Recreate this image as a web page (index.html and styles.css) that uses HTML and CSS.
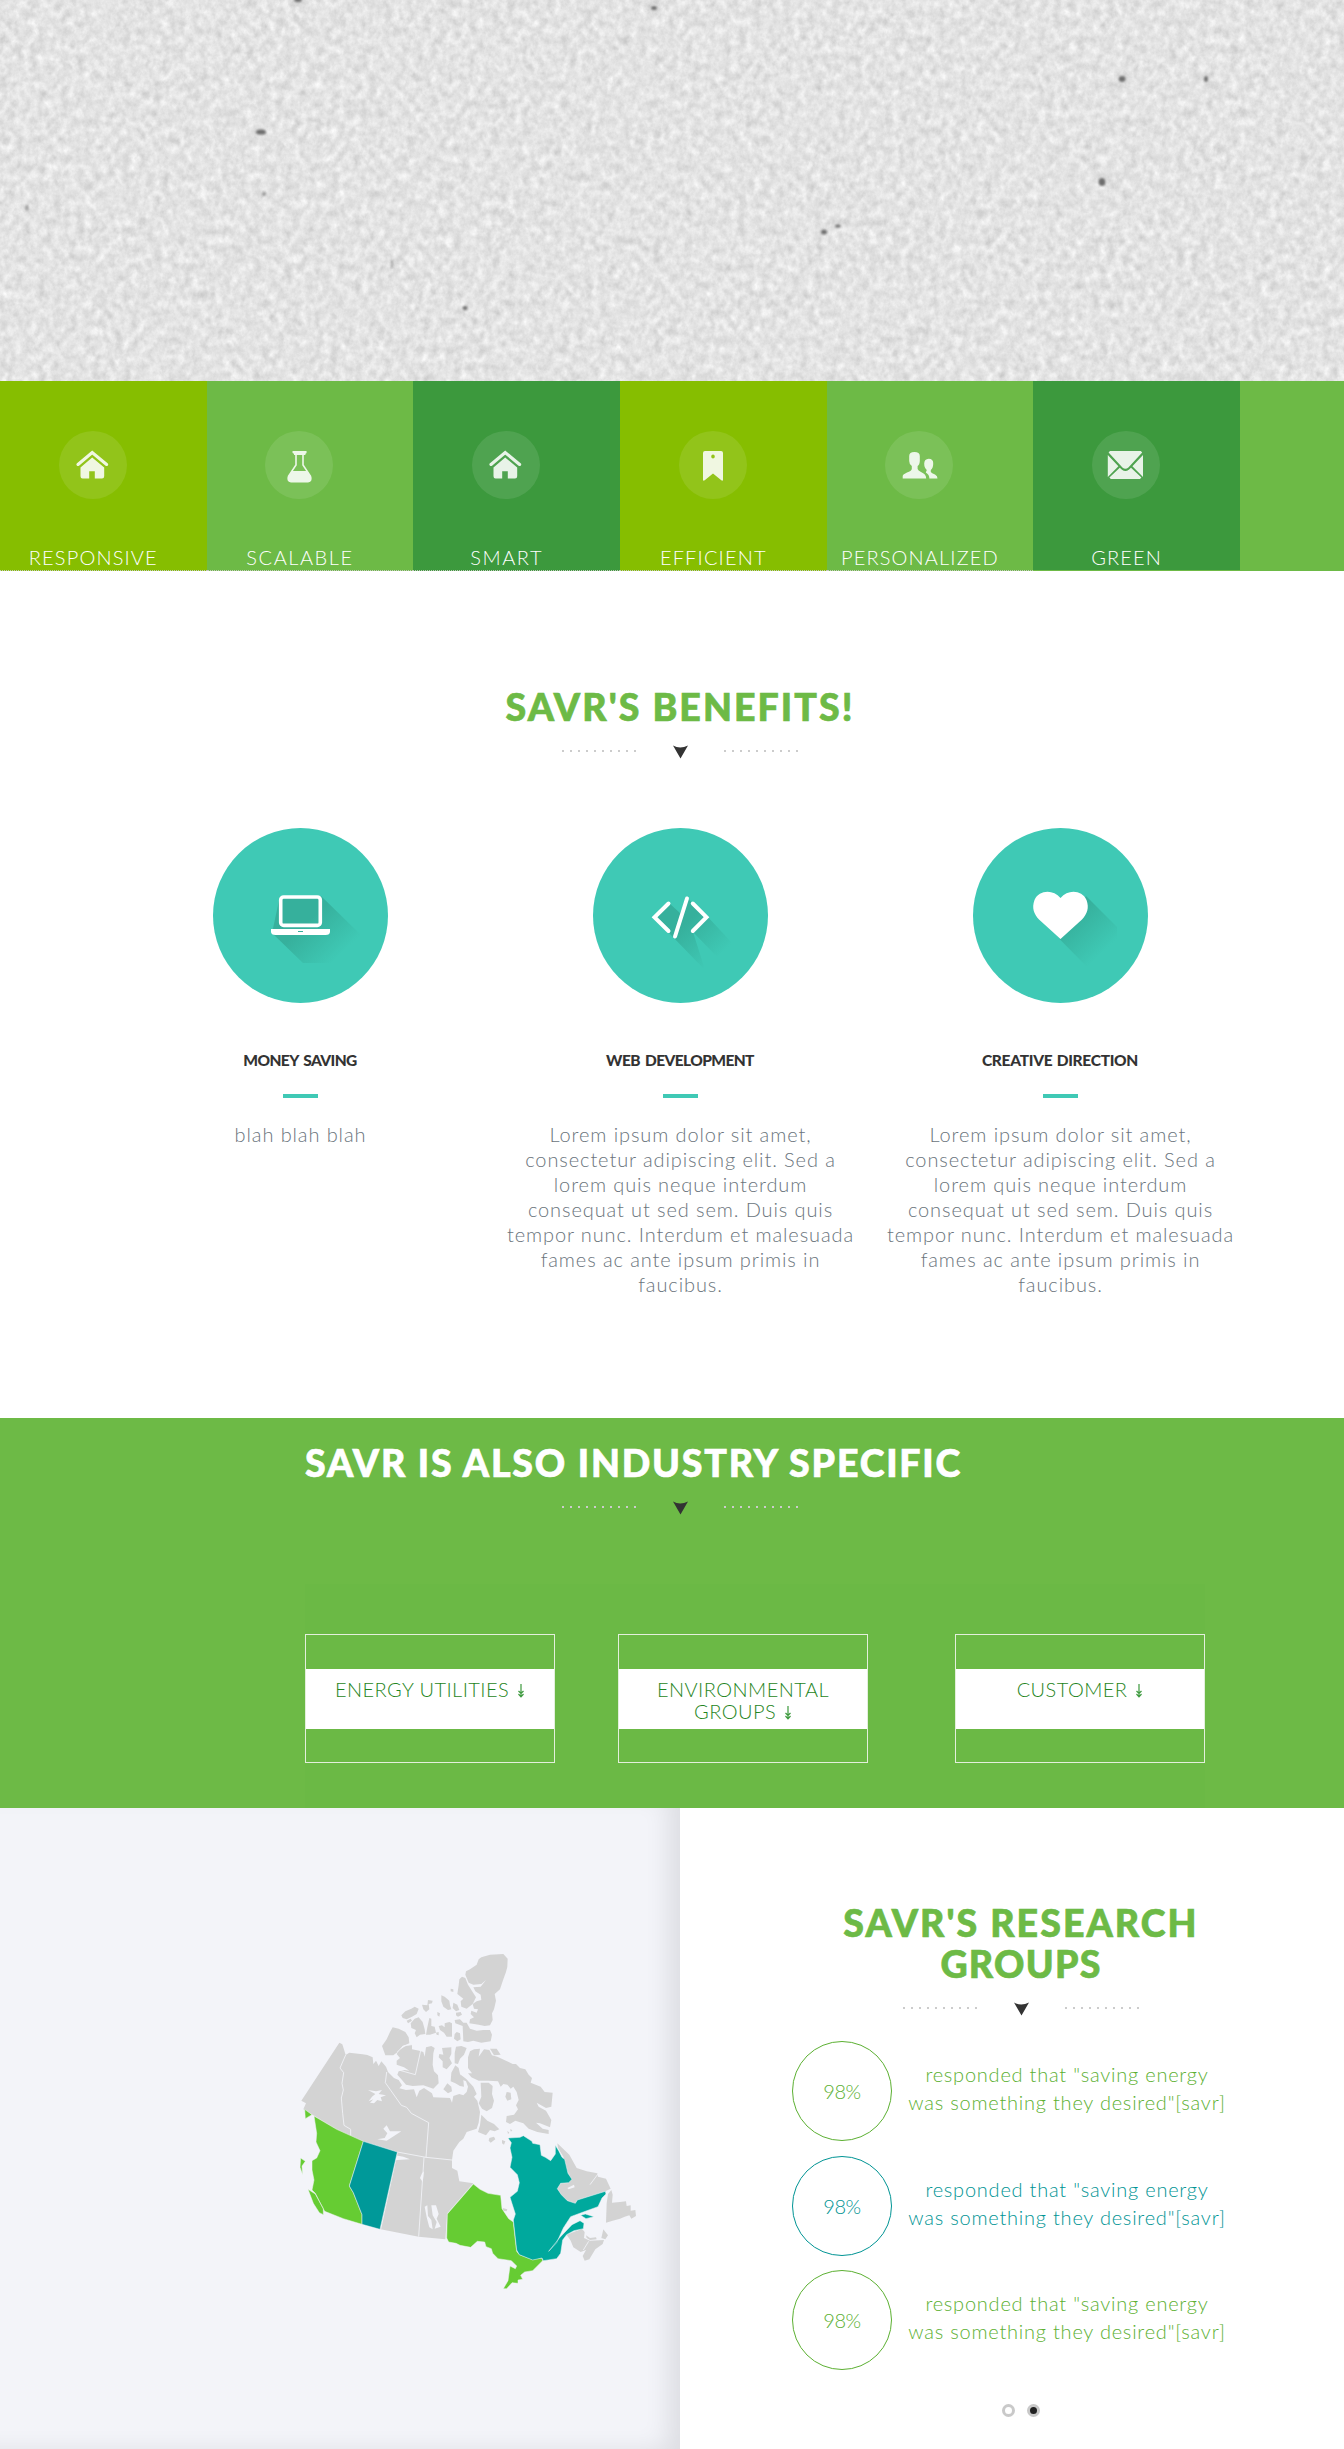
FILE: index.html
```html
<!DOCTYPE html>
<html lang="en">
<head>
<meta charset="utf-8">
<title>SAVR</title>
<link rel="stylesheet" href="styles.css">
</head>
<body>
<header class="hero">
  <svg class="paper" width="1344" height="381" viewBox="0 0 1344 381" aria-hidden="true">
    <defs>
      <filter id="grain" x="0" y="0" width="100%" height="100%" color-interpolation-filters="sRGB">
        <feTurbulence type="fractalNoise" baseFrequency="0.13 0.11" numOctaves="4" seed="12"/>
        <feColorMatrix values="0.16 0.12 0 0 0.75  0.16 0.12 0 0 0.75  0.16 0.12 0 0 0.75  0 0 0 0 1"/>
      </filter>
      <filter id="soft"><feGaussianBlur stdDeviation="0.8"/></filter>
    </defs>
    <rect width="1344" height="381" fill="#e3e3e3"/>
    <rect width="1344" height="381" filter="url(#grain)"/>
    <g fill="#6d6d6d" filter="url(#soft)">
      <ellipse cx="261" cy="132" rx="5" ry="2.6"/>
      <ellipse cx="298" cy="0" rx="4" ry="2"/>
      <ellipse cx="654" cy="8" rx="3" ry="2"/>
      <ellipse cx="1122" cy="79" rx="3.5" ry="3"/>
      <ellipse cx="1206" cy="79" rx="2" ry="3"/>
      <ellipse cx="1102" cy="182" rx="3.5" ry="4"/>
      <ellipse cx="824" cy="232" rx="3" ry="2.5"/>
      <ellipse cx="838" cy="226" rx="3" ry="1.5"/>
      <ellipse cx="465" cy="308" rx="2.5" ry="2"/>
      <ellipse cx="264" cy="194" rx="2" ry="2" opacity=".6"/>
      <ellipse cx="27" cy="208" rx="1.5" ry="3" opacity=".6"/>
      <ellipse cx="392" cy="264" rx="1.2" ry="5" opacity=".5"/>
    </g>
  </svg>
</header>

<nav class="tiles">
  <a class="tile lime"><span class="badge"><svg viewBox="0 0 68 68"><path d="M19 33.4 33.2 21.6 47.6 33.4" fill="none" stroke="currentColor" stroke-width="3.2" stroke-linecap="round"/><path d="M33.2 26.4 45.2 36.6V45.3Q45.2 47.5 43 47.5H35.8V40.2H30.2V47.5H23.5Q21.5 47.5 21.5 45.3V36.6Z"/></svg></span><span class="label">RESPONSIVE</span></a>
  <a class="tile leaf"><span class="badge"><svg viewBox="0 0 68 68"><path d="M28 20H41Q42 20 41.6 21.4 41.2 22.6 40.4 22.8V24H29V22.8Q27.6 22.4 27.4 21.2 27.3 20 28 20Z"/><path d="M31 23V34L23.6 45Q21.8 50.2 26 50.6H43Q47.2 50.2 45.4 45L38 34V23" fill="none" stroke="currentColor" stroke-width="1.6"/><path d="M26.8 40H42.2L45.6 45.5Q46.6 50.6 43 51H26Q22.4 50.6 23.4 45.5Z"/></svg></span><span class="label wide">SCALABLE</span></a>
  <a class="tile forest"><span class="badge"><svg viewBox="0 0 68 68"><path d="M19 33.4 33.2 21.6 47.6 33.4" fill="none" stroke="currentColor" stroke-width="3.2" stroke-linecap="round"/><path d="M33.2 26.4 45.2 36.6V45.3Q45.2 47.5 43 47.5H35.8V40.2H30.2V47.5H23.5Q21.5 47.5 21.5 45.3V36.6Z"/></svg></span><span class="label wide">SMART</span></a>
  <a class="tile lime"><span class="badge"><svg viewBox="0 0 68 68"><path fill-rule="evenodd" d="M26 20H42Q44 20 44 22V49Q43.6 50.6 42 49L34 42.6 26 49Q24.4 50.6 24 49V22Q24 20 26 20ZM34 23.4A1.8 2 0 1 0 34 27.4 1.8 2 0 1 0 34 23.4Z"/></svg></span><span class="label">EFFICIENT</span></a>
  <a class="tile leaf"><span class="badge"><svg viewBox="0 0 68 68"><path d="M29.4 21Q34.8 21 34.8 25V30Q34.6 34 32.6 35V38Q33 39.6 36 41 41 43 41.2 47.4H17.7V45Q18 43.4 22 41.6 26.4 40 26.8 38V35Q24.2 33.4 24.2 30V25Q24.2 21 29.4 21Z"/><path d="M43.7 27.8Q48.2 28 48.2 32 48.4 37 45.8 39V41Q46.6 42.4 50 43.6 52.6 45 52.5 47.4H44.4Q44.4 43.6 40.8 41.4L41.8 39Q39.2 37 39.2 32.6 39.4 28 43.7 27.8Z"/></svg></span><span class="label">PERSONALIZED</span></a>
  <a class="tile forest last"><span class="badge"><svg viewBox="0 0 68 68"><path d="M16.6 21.5 18 20H48.8L50.2 21.5 36.4 36.5Q33.4 39 30.4 36.5ZM15.8 24 26.4 35.2 15.8 46ZM51 24V46L40.4 35.2ZM27.8 36.8 30 38.8Q33.4 41.4 36.8 38.8L39 36.8 49.4 46.6 48 48H18.8L17.4 46.6Z"/></svg></span><span class="label">GREEN</span></a>
</nav>

<section class="benefits">
  <h2 class="title">SAVR'S BENEFITS!</h2>
  <svg class="rule" width="238" height="16" viewBox="0 0 238 16"><path class="dots" d="M1 7H76M163 7H238"/><path d="M112 1.5Q119 5.5 127 1.5L119.5 14.5Z" fill="#333"/></svg>
  <div class="columns">
    <article class="card">
      <svg class="disc" viewBox="0 0 175 175"><defs><linearGradient id="fade" gradientUnits="userSpaceOnUse" x1="96" y1="92" x2="128" y2="126"><stop offset="0" stop-color="#36b09c"/><stop offset="1" stop-color="#3fc9b5"/></linearGradient></defs>
        <circle cx="87.5" cy="87.5" r="87.5" fill="#3fc9b5"/>
        <path d="M67 68H108L147 106V135H90L59 105Z" fill="url(#fade)"/>
        <rect x="67.7" y="69" width="39.6" height="28.4" rx="3" fill="none" stroke="#fff" stroke-width="3.6"/>
        <path d="M58 101H117V103.5Q117 107 112.5 107H62.5Q58 107 58 103.5Z" fill="#fff"/><path d="M85 103.5H90" stroke="#36b09c"/></svg>
      <h3 class="tight">MONEY SAVING</h3><hr>
      <p>blah blah blah</p>
    </article>
    <article class="card">
      <svg class="disc" viewBox="0 0 175 175"><circle cx="87.5" cy="87.5" r="87.5" fill="#3fc9b5"/>
        <path d="M76 75 87 85 93.8 69 101 77 114.8 89 142 118 130 135 100 104 112 142 76 105 60 89Z" fill="url(#fade)"/>
        <path d="M75.5 75.5 61.5 89.2 75.5 103M94 70.5 82 108.5M99.8 75.5 113.5 89.2 99.8 103" fill="none" stroke="#fff" stroke-width="4" stroke-linecap="round"/></svg>
      <h3 class="tight">WEB DEVELOPMENT</h3><hr>
      <p>Lorem ipsum dolor sit amet,<br>consectetur adipiscing elit. Sed a<br>lorem quis neque interdum<br>consequat ut sed sem. Duis quis<br>tempor nunc. Interdum et malesuada<br>fames ac ante ipsum primis in<br>faucibus.</p>
    </article>
    <article class="card">
      <svg class="disc" viewBox="0 0 175 175"><circle cx="87.5" cy="87.5" r="87.5" fill="#3fc9b5"/>
        <path d="M113 68 144 99V118L117 142 86.5 111Z" fill="url(#fade)"/>
        <path d="M87.5 70C80 61 66 62 61.5 72 58.5 80 61 86 66 91.5L87.5 111 109 91.5C114 86 116.5 80 113.5 72 109 62 95 61 87.5 70Z" fill="#fff"/></svg>
      <h3>CREATIVE DIRECTION</h3><hr>
      <p>Lorem ipsum dolor sit amet,<br>consectetur adipiscing elit. Sed a<br>lorem quis neque interdum<br>consequat ut sed sem. Duis quis<br>tempor nunc. Interdum et malesuada<br>fames ac ante ipsum primis in<br>faucibus.</p>
    </article>
  </div>
</section>

<section class="industry">
  <h2 class="title">SAVR IS ALSO INDUSTRY SPECIFIC</h2>
  <svg class="rule" width="238" height="16" viewBox="0 0 238 16"><path class="dots" d="M1 7H76M163 7H238"/><path d="M112 1.5Q119 5.5 127 1.5L119.5 14.5Z" fill="#333"/></svg>
  <div class="boxes">
    <a class="box"><span>ENERGY UTILITIES <svg class="down" viewBox="0 0 8 14"><path d="M4 0V13M1.5 7 4 9.5 6.500 7M1.500 10 4 12.800 6.500 10"/></svg></span></a>
    <a class="box"><span>ENVIRONMENTAL<br>GROUPS <svg class="down" viewBox="0 0 8 14"><path d="M4 0V13M1.500 7 4 9.500 6.500 7M1.500 10 4 12.800 6.500 10"/></svg></span></a>
    <a class="box"><span>CUSTOMER <svg class="down" viewBox="0 0 8 14"><path d="M4 0V13M1.500 7 4 9.500 6.500 7M1.500 10 4 12.800 6.500 10"/></svg></span></a>
  </div>
</section>

<section class="research">
  <div class="map">
    <svg width="360" height="360" viewBox="0 0 1080 1080" role="img" aria-label="Map of Canada">
      <g class="land">
        <!-- mainland territories and prairies -->
        <path d="M148 308 157 313 167 345 178 338 218 343 232 345 248 352 250 372 258 362 266 378 274 364 288 380 294 396 312 414 326 420 336 436 328 445 348 450 372 448 380 472 388 452 402 444 426 460 430 472 480 474 486 488 490 468 508 462 520 466 530 456 534 440 528 424 510 416 512 404 528 416 550 440 560 462 552 470 562 482 570 516 566 548 560 566 530 576 520 596 508 606 490 632 486 660 486 684 502 692 508 724 550 730 472 820 466 898 386 890 272 868 218 853 180 740 210 610 40 508 48 490 34 482Z"/>
        <!-- Arctic islands -->
        <path d="M574 52 600 44 640 42 653 56 652 80 648 96 640 118 630 148 614 162 618 182 612 208 606 220 608 240 600 256 584 258 566 254 538 250 540 238 552 232 542 222 544 212 560 218 564 208 552 206 548 192 560 184 574 180 572 164 556 154 550 142 572 140 588 120 574 132 550 134 536 128 526 104 528 94 540 88 560 74 566 58Z"/>
        <path d="M516 110 526 114 534 134 558 172 548 192 530 206 514 200 512 184 520 176 502 162 506 136 508 118Z"/>
        <path d="M454 166 464 170 478 182 480 196 484 208 474 210 460 200 454 184ZM490 188 502 194 508 210 498 214 488 204ZM482 146 490 148 490 156 482 154ZM498 218 512 216 516 224 504 230 498 226ZM442 216 450 220 448 230 442 226ZM396 194 412 196 414 180 428 182 426 190 416 192 418 208 408 216 400 208ZM334 226 346 214 364 206 374 200 386 206 380 222 366 230 350 238 338 234ZM350 242 362 236 366 242 354 250Z"/>
        <path d="M362 250 374 236 386 232 398 246 404 268 406 282 390 284 380 292 374 280 378 270 364 264ZM418 234 424 236 424 258 434 260 438 278 420 284 408 284 412 262ZM438 278 446 276 446 286 440 284ZM446 258 456 256 464 262 464 250 478 246 486 250 486 290 470 290 462 278 450 270ZM500 276 510 280 512 298 502 304 492 296 494 282ZM494 240 510 238 520 248 530 248 540 266 560 272 580 270 600 270 606 284 602 304 574 308 550 302 534 306 520 304 518 258 496 250Z"/>
        <path d="M308 262 326 266 346 276 356 292 358 310 338 318 326 334 310 346 286 346 276 318 290 298 300 276Z"/>
        <path d="M328 330 350 316 366 314 366 328 388 332 400 336 404 350 408 322 424 318 434 324 430 340 428 374 432 394 444 406 446 430 430 446 400 436 368 438 348 434 336 420 322 404 326 394 344 390 358 392 342 382 320 374 320 362 330 354 320 342Z"/>
        <path d="M456 324 484 322 484 342 478 354 486 370 470 388 458 382 458 364 446 352 448 342 460 344ZM498 320 514 318 530 324 522 344 510 356 504 372 494 370 494 340ZM496 376 506 384 510 402 520 420 522 440 510 438 496 430 482 424 484 398ZM472 430 484 440 486 454 474 460 460 448Z"/>
        <path d="M552 328 570 326 566 350 582 328 598 330 606 346 622 350 656 366 668 372 678 372 690 384 706 388 716 404 726 414 722 428 752 440 764 456 788 458 784 500 768 504 740 488 746 500 768 512 784 540 780 562 750 550 738 548 758 566 776 570 776 582 742 576 716 566 700 550 676 542 660 552 648 546 650 528 672 524 684 508 678 496 686 480 680 456 670 440 662 446 652 434 640 432 632 440 624 424 596 422 566 422 544 412 534 400 546 400 534 384 534 352 540 334ZM600 326 620 326 632 344 612 346ZM572 428 596 428 608 438 606 462 612 482 606 504 590 514 576 506 566 490 574 470ZM574 524 592 542 612 552 628 568 614 574 600 570 588 586 564 576 570 556ZM650 456 662 458 664 478 652 482 646 470ZM598 594 612 590 616 598 602 608 596 602ZM636 600 646 604 642 614 636 610ZM652 572 658 578 654 582ZM660 568 667 570 663 575Z"/>
        <!-- Labrador, Newfoundland and the Maritimes -->
        <path d="M802 610 838 644 860 684 890 694 922 700 924 710 948 716 962 746 946 754 862 780 856 790 832 786 814 772 802 746 812 730 836 728 844 716 830 690 820 650 804 624ZM964 750 968 764 966 788 990 786 1008 784 1010 798 1022 796 1022 812 1036 810 1038 828 1024 836 1018 826 1004 830 990 836 968 842 948 848 950 790 954 762ZM830 884 876 866 884 876 882 894 900 902 942 900 938 912 916 928 898 958 884 962 878 948 888 930 872 936 850 922 842 902ZM888 886 900 894 918 892 920 898 900 900 890 894ZM940 868 954 886 946 898 934 894ZM638 804 652 808 650 814 640 812Z"/>
      </g>
      <!-- lakes -->
      <path class="water" d="M234 450 258 454 276 450 266 462 288 466 272 472 276 484 262 480 252 490 240 488 250 478 236 484 246 470 256 462ZM290 556 300 574 334 574 312 588 290 602 262 598 284 594 292 580 280 566ZM308 656 316 646 340 650 360 658 322 660 308 664ZM396 700 402 694 398 726 390 714ZM404 800 412 796 414 828 424 840 428 868 418 862 410 832ZM424 796 438 796 446 822 440 836 452 860 434 866 440 846 428 826ZM832 744 852 734 854 742 836 748Z"/>
      <path class="border" d="M167 345 150 384 161 398 156 430 160 450 154 474 158 520 162 556 182 568V590M290 396 286 428 334 496 350 502 364 520 416 548 408 652M366 314 340 318 322 336M392 332 376 404 326 390M322 636 408 652 486 660M402 652 386 890M322 636 272 868M924 702 900 734M896 904 880 930"/>
      <g class="green">
        <path d="M44 508 66 524 46 536ZM72 528 140 568 220 604 178 738 190 758 216 824 216 853 160 836 104 814 88 784 76 760 66 750 72 720 66 690 66 662 80 654 90 632 78 606 80 580ZM32 654 46 664 36 678 38 704 30 682ZM54 748 76 762 86 780 100 806 100 824 88 818 70 790Z"/>
        <path d="M550 732 570 748 594 760 632 766 636 806 656 836 670 846 680 934 688 944 726 958 756 954 758 962 728 992 704 996 692 1006 698 1018 684 1020 684 1030 666 1028 650 1046 640 1046 654 1022 660 978 676 986 680 978 664 962 624 956 608 940 604 926 588 920 584 906 562 904 542 922 510 916 498 910 476 906 470 894 472 822Z"/>
      </g>
      <path class="blue" d="M220 604 322 636 270 868 216 853 216 824 190 758 178 738Z"/>
      <path class="teal" d="M654 594 690 592 700 587 726 604 728 610 750 614 754 646 766 652 782 662 796 642 796 616 806 632 816 652 824 658 834 700 846 718 836 728 812 730 802 746 814 764 832 782 856 790 862 780 946 754 948 762 936 774 924 800 880 816 842 830 820 864 800 908 776 934 808 894 846 854 870 842 882 850 880 866 852 872 830 884 818 900 812 940 800 956 760 962 756 954 728 960 688 944 680 930 670 840 676 822 660 772 682 754 688 728 682 704 660 682 666 652 660 624 664 608ZM872 826 886 822 912 830 888 836Z"/>
    </svg>
  </div>
  <div class="groups">
    <h2 class="title">SAVR'S RESEARCH<br><span>GROUPS</span></h2>
    <svg class="rule" width="238" height="16" viewBox="0 0 238 16"><path class="dots" d="M1 7H76M163 7H238"/><path d="M112 1.5Q119 5.5 127 1.5L119.5 14.5Z" fill="#333"/></svg>
    <div class="stats">
      <div class="stat"><span class="ring">98%</span><p>responded that "saving energy<br>was something they desired"[savr]</p></div>
      <div class="stat alt"><span class="ring">98%</span><p>responded that "saving energy<br>was something they desired"[savr]</p></div>
      <div class="stat"><span class="ring">98%</span><p>responded that "saving energy<br>was something they desired"[savr]</p></div>
    </div>
    <div class="pager"><b></b><b class="on"></b></div>
  </div>
</section>
</body>
</html>
```
FILE: styles.css
```css
* { box-sizing: border-box; }
body { margin: 0; font-family: Lato, "Open Sans", sans-serif; font-weight: 300; font-size: 20px; color: #6a747c; background: #fff; }
p, h2, h3 { margin: 0; }
svg { display: block; }
.hero, .paper { height: 381px; }

.tiles { height: 190px; display: flex; background: #6dba46; }
.tile { width: 206.67px; padding: 50px 21px 0 0; display: flex; flex-direction: column; align-items: center; color: #fff; border-bottom: 1px dotted #c4c9bd; }
.tile.last { border-bottom: 1px solid #6dba46; }
.lime { background: #86be00; }
.leaf { background: #6dba46; }
.forest { background: #3c993d; }
.badge { width: 68px; height: 68px; border-radius: 50%; background: rgba(255, 255, 255, .1); }
.badge svg { fill: currentColor; opacity: .87; }
.label { margin: 46px -1px 0 0; line-height: 24px; letter-spacing: 1.15px; }
.label.wide { letter-spacing: 1.55px; }

.title { font-weight: 900; font-size: 37.5px; line-height: 41px; letter-spacing: 2.05px; color: #6dba46; -webkit-text-stroke: .7px; }
.rule { margin: 17px auto 0; }
.dots { stroke: #ccc; stroke-width: 2; stroke-dasharray: 2 6; fill: none; }

.benefits { width: 1140px; height: 847px; margin-left: 110px; padding-top: 115px; text-align: center; }
.columns { display: grid; grid-template-columns: repeat(3, 1fr); margin-top: 68px; }
.disc { width: 175px; height: 175px; margin: 0 auto; }
h3 { margin-top: 47px; font-size: 15.5px; line-height: 20px; font-weight: 900; color: #333; letter-spacing: -.3px; word-spacing: 1px; }
h3.tight { letter-spacing: -.6px; word-spacing: 2px; }
hr { width: 35px; height: 4px; margin: 24px auto; border: 0; background: #3fc9b5; }
.card p { line-height: 25px; letter-spacing: .9px; margin-right: -1px; }

.industry { height: 390px; padding-top: 24px; background: #6dba46; }
.industry .title { padding-left: 305px; color: #fff; letter-spacing: 1.8px; }
.industry .rule { margin-left: 561px; }
.boxes { width: 900px; height: 224px; margin: 68px 0 0 305px; padding-top: 50px; display: grid; grid-template-columns: 313px 337px 250px; background: #6bb945; }
.box { width: 250px; height: 129px; padding-top: 34px; border: 1px solid #e3efdc; }
.box span { display: block; height: 60px; padding-top: 9px; background: #fff; color: #1f8522; text-align: center; line-height: 22px; letter-spacing: .45px; }
.down { display: inline-block; width: 8px; height: 14px; margin-left: 2px; vertical-align: -1px; fill: none; stroke: #3c993d; stroke-width: 1.2; }

.research { height: 641px; display: flex; }
.map { width: 680px; padding: 132px 0 0 290px; background: #f3f4f9; box-shadow: inset -20px -6px 25px -8px rgba(0, 0, 0, .09); }
.land { fill: #d3d3d3; }
.water { fill: #f3f4f9; }
.border { fill: none; stroke: #f3f4f9; stroke-width: 2.5; }
.green { fill: #66cc33; }
.blue { fill: #009999; }
.teal { fill: #00a99d; }
.green, .blue, .teal { stroke: #f3f4f9; stroke-width: 1.5; }

.groups { width: 570px; padding: 94px 0 0 112px; text-align: center; }
.groups .title span { letter-spacing: 1.25px; }
.stats { margin-top: 24px; display: grid; gap: 14.5px; }
.stat { height: 100px; display: flex; color: #5cb032; }
.stat.alt { color: #009494; }
.ring { width: 100px; border: 1px solid; border-radius: 50%; display: flex; align-items: center; justify-content: center; letter-spacing: -.5px; }
.stat p { width: 350px; padding-top: 19px; line-height: 28px; letter-spacing: .77px; }
.pager { margin-top: 34px; display: flex; justify-content: center; gap: 12px; }
.pager b { width: 13px; height: 13px; border: 3px solid #c9c9c9; border-radius: 50%; }
.pager .on { background: #222; }
```
